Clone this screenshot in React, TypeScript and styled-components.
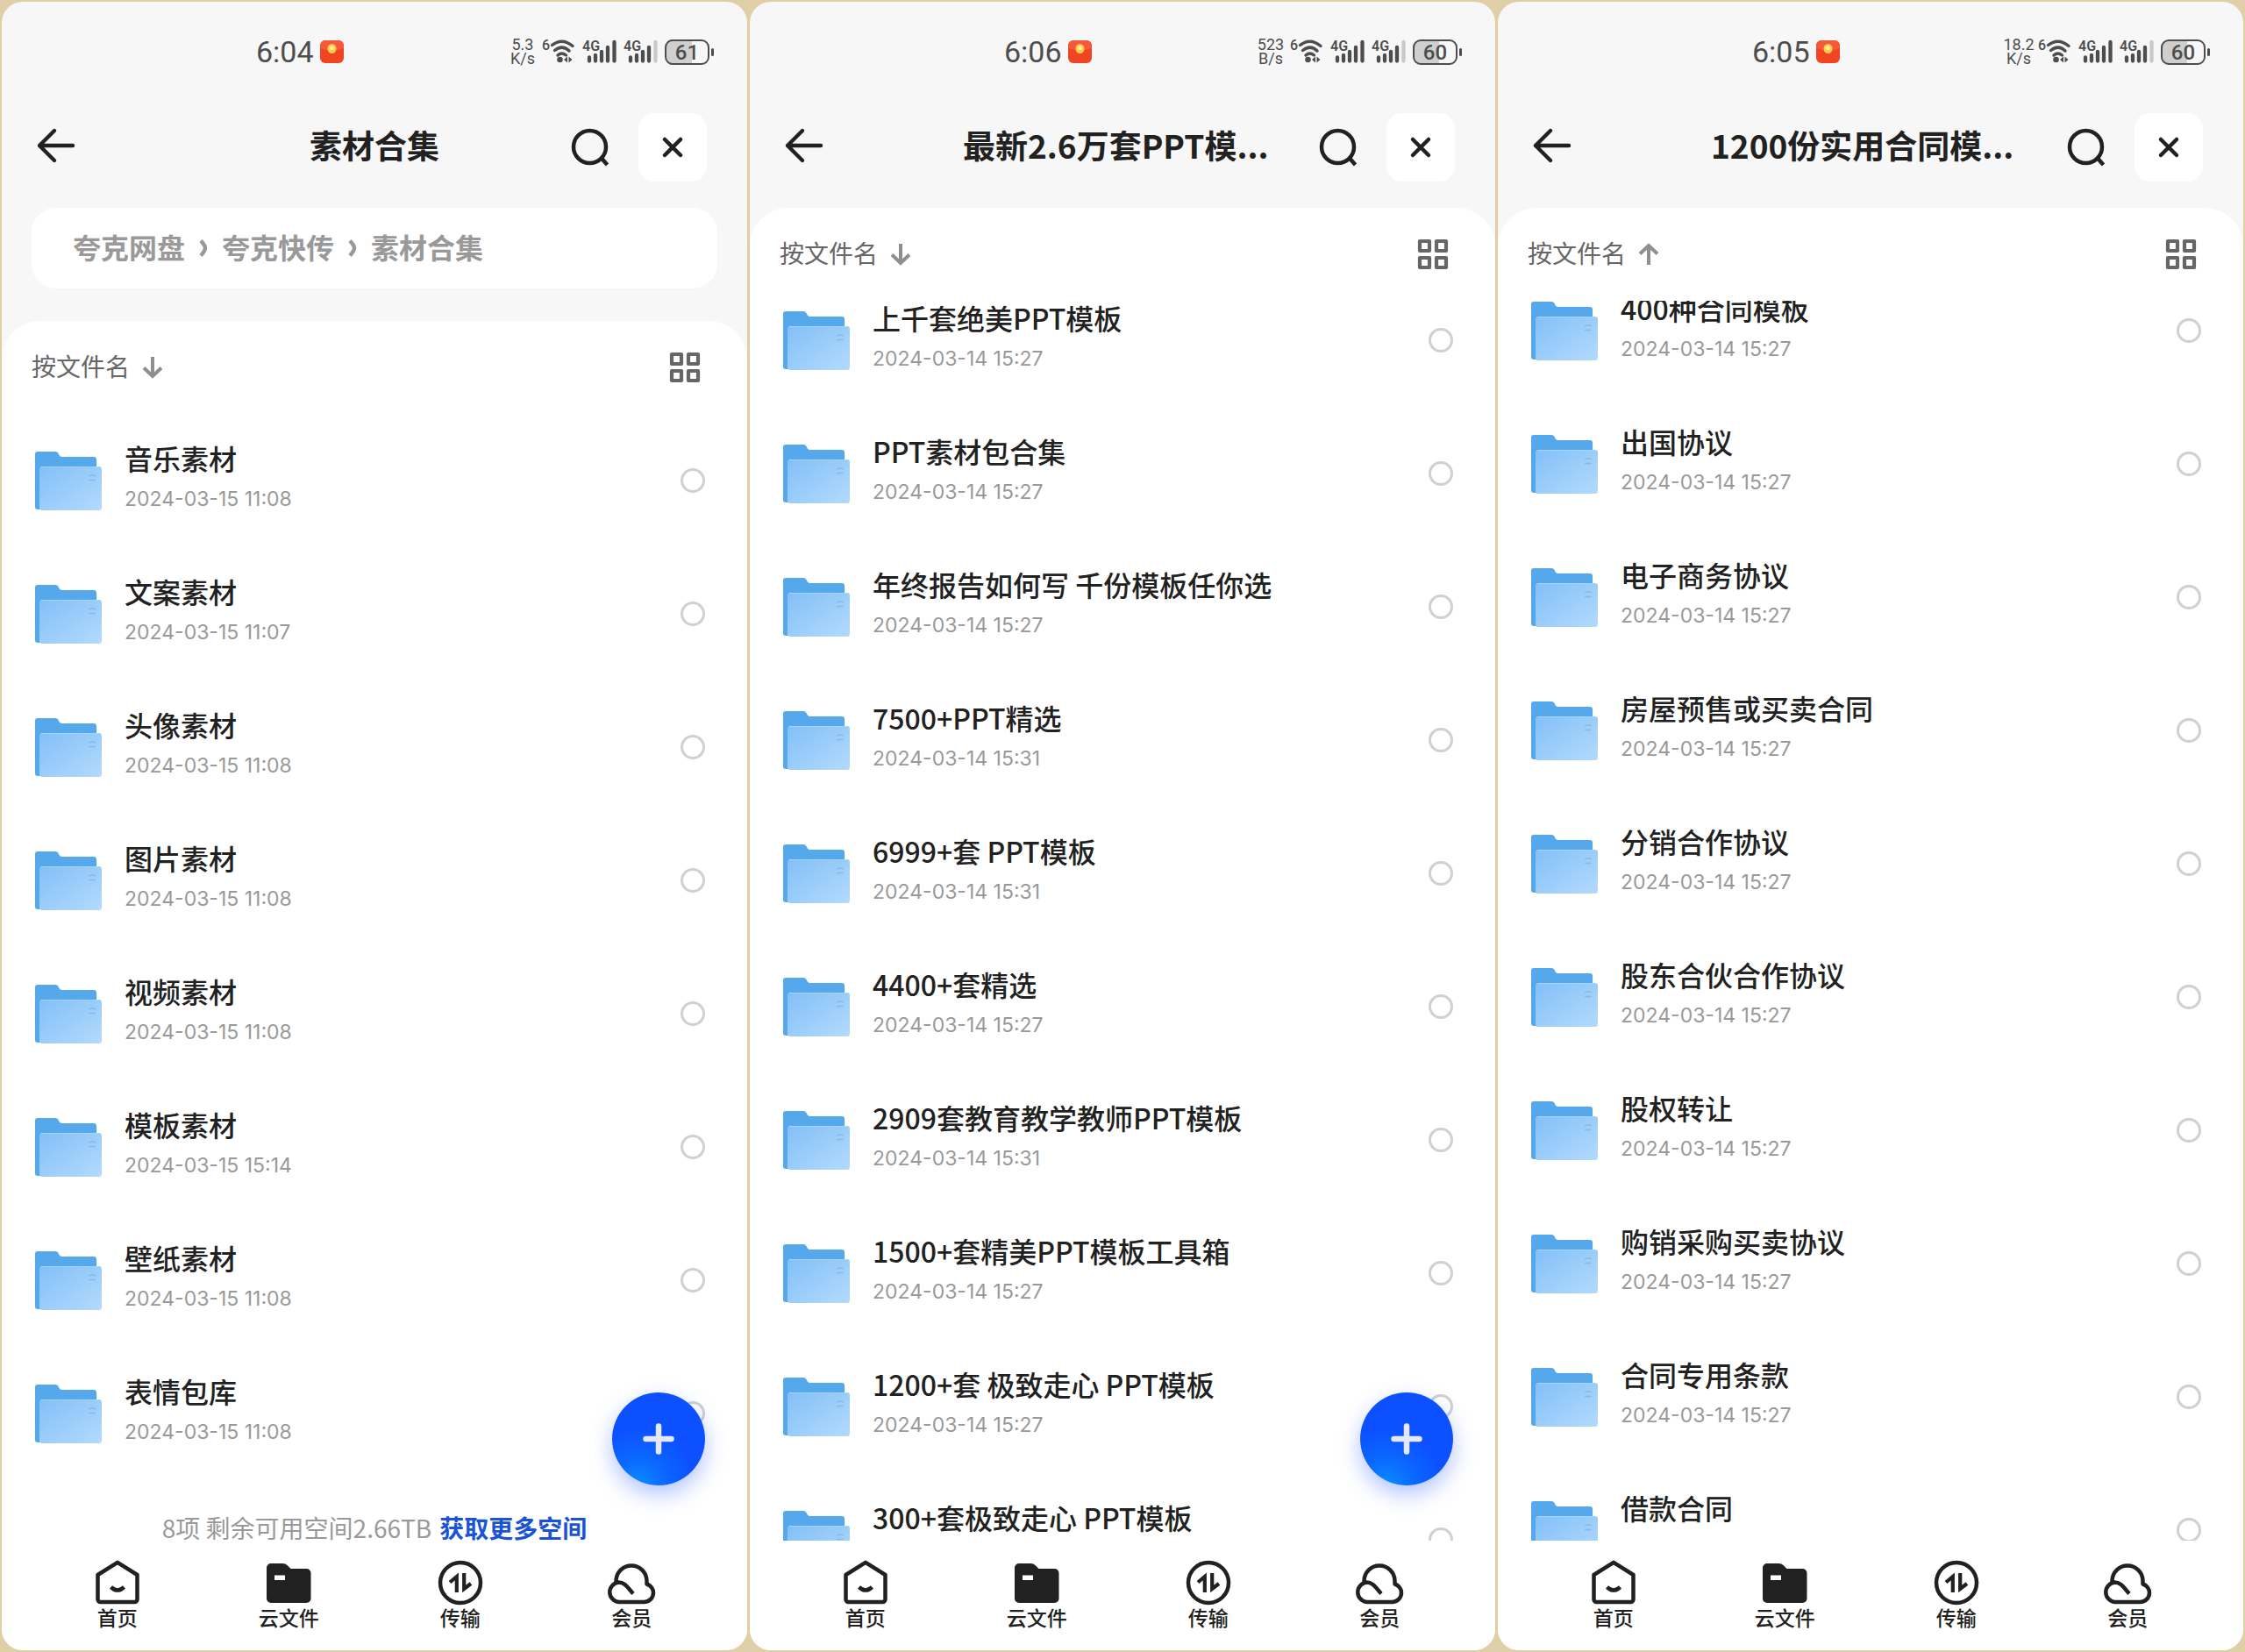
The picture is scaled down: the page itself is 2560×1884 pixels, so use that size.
import React, { useLayoutEffect, useRef } from 'react';
import styled, { createGlobalStyle } from 'styled-components';

const cjk = '"Noto Sans CJK SC", "Noto Sans", sans-serif';
const ink = '#212121';
const statusInk = '#4d4d4d';

const GlobalStyle = createGlobalStyle`
  *, *::before, *::after { box-sizing: border-box; }
  body { margin: 0; background: #dfcea6; font-family: ${cjk}; color: ${ink}; }
  button { border: 0; padding: 0; background: none; color: inherit; font: inherit; cursor: pointer; }
  a { color: inherit; text-decoration: none; }
  svg { display: block; overflow: visible; }
`;

const Board = styled.main`
  display: grid;
  grid-template-columns: repeat(3, minmax(0, 1fr));
  gap: 3px;
  height: 100vh;
  padding: 2px;
`;

const Phone = styled.section`
  position: relative;
  display: flex;
  flex-direction: column;
  min-height: 0;
  overflow: hidden;
  border-radius: 24px;
  background: #f7f7f7;
`;

const StatusBar = styled.div`
  display: flex;
  flex: none;
  align-items: center;
  justify-content: space-between;
  height: 114px;
  padding: 0 38px 0 290px;
  color: ${statusInk};
  font-family: Roboto, ${cjk};
`;

const Clock = styled.div`
  display: flex;
  align-items: center;
  gap: 7px;
  font-size: 34px;
  line-height: 40px;
`;

const Indicators = styled.div`
  display: flex;
  align-items: center;
  gap: 8px;
`;

const Speed = styled.div`
  display: flex;
  flex-direction: column;
  align-items: center;
  width: 28px;
  font-size: 18px;
  line-height: 16px;
  white-space: nowrap;
`;

const Battery = styled.div<{ $level: number }>`
  position: relative;
  width: 51px;
  height: 29px;
  margin-right: 5px;
  border: 2px solid ${statusInk};
  border-radius: 9px;
  background: linear-gradient(to right, #cfcfcf ${(p) => p.$level}%, transparent ${(p) => p.$level}%);
  font-size: 24px;
  font-weight: 500;
  line-height: 26px;
  text-align: center;

  &::after {
    content: '';
    position: absolute;
    top: 8px;
    right: -7px;
    width: 3px;
    height: 9px;
    border-radius: 2px;
    background: ${statusInk};
  }
`;

const TitleBar = styled.header`
  display: grid;
  grid-template-columns: 1fr minmax(364px, auto) 1fr;
  flex: none;
  align-items: center;
  height: 104px;
  margin-bottom: 17px;
  padding: 0 46px 0 38px;
`;

const Title = styled.h1<{ $long: boolean }>`
  margin: 0;
  padding-bottom: 6px;
  padding-left: ${(p) => (p.$long ? 4 : 8)}px;
  font-size: 37px;
  font-weight: 700;
  line-height: 48px;
  text-align: ${(p) => (p.$long ? 'left' : 'center')};
  white-space: nowrap;
`;

const Actions = styled.div`
  display: flex;
  align-items: center;
  justify-content: flex-end;
  gap: 33px;
`;

const CloseButton = styled.button`
  display: grid;
  place-items: center;
  width: 78px;
  height: 78px;
  border-radius: 18px;
  background: #fff;
`;

const Crumbs = styled.nav`
  display: flex;
  flex: none;
  align-items: center;
  gap: 16px;
  height: 92px;
  margin: 0 34px 37px;
  padding: 0 47px;
  border-radius: 28px;
  background: #fff;
  color: #999;
  font-size: 32px;
  font-weight: 700;
  line-height: 44px;
`;

const Crumb = styled.a`
  padding-bottom: 4px;
`;

const Sheet = styled.div`
  display: flex;
  flex: 1;
  flex-direction: column;
  min-height: 0;
  border-radius: 44px 44px 0 0;
  background: #fff;
`;

const Toolbar = styled.div`
  display: flex;
  flex: none;
  align-items: center;
  justify-content: space-between;
  height: 106px;
  padding: 0 54px 0 34px;
  color: #666;
`;

const SortButton = styled.button`
  display: flex;
  align-items: center;
  gap: 14px;
  font-size: 28px;
  line-height: 40px;
`;

const SortLabel = styled.span`
  padding-bottom: 4px;
`;

const List = styled.div`
  flex: 1;
  min-height: 0;
  overflow-y: auto;
  scrollbar-width: none;
`;

const Rows = styled.ul`
  margin: 0;
  padding: 0;
  list-style: none;
`;

const Row = styled.li`
  height: 152px;
`;

const RowLabel = styled.label`
  display: grid;
  grid-template-columns: 76px 1fr 28px;
  align-items: center;
  column-gap: 26px;
  height: 100%;
  padding: 0 48px 0 38px;
`;

const RowText = styled.span`
  display: flex;
  flex-direction: column;
  min-width: 0;
  padding-bottom: 6px;
`;

const Name = styled.span`
  overflow: hidden;
  font-size: 32px;
  font-weight: 500;
  line-height: 48px;
  text-overflow: ellipsis;
  white-space: nowrap;
`;

const Stamp = styled.time`
  color: #999;
  font-family: Inter, ${cjk};
  font-size: 23px;
  line-height: 46px;
`;

const Pick = styled.input`
  appearance: none;
  width: 28px;
  height: 28px;
  margin: 0;
  border: 3px solid #d0d0d0;
  border-radius: 50%;
  background: #fff;

  &:checked { border: 8px solid #0d53ff; }
`;

const Quota = styled.p`
  display: flex;
  justify-content: center;
  gap: 9px;
  margin: 0;
  padding-top: 39px;
  color: #999;
  font-size: 28px;
  line-height: 30px;

  a { color: #1a53d8; font-weight: 700; }
`;

const AddButton = styled.button`
  position: absolute;
  right: 48px;
  bottom: 188px;
  display: grid;
  place-items: center;
  width: 106px;
  height: 106px;
  border-radius: 50%;
  background: radial-gradient(circle at 28% 100%, #0a8dff 0%, #0b68ff 24%, #0d50ff 50%);
  box-shadow: 0 10px 24px rgba(40, 90, 255, 0.36);
`;

const TabBar = styled.nav`
  display: grid;
  grid-template-columns: repeat(4, 1fr);
  flex: none;
  height: 125px;
  padding: 22px 34px 0;
  background: #fff;
`;

const Tab = styled.a`
  display: flex;
  flex-direction: column;
  align-items: center;
  font-size: 23px;
  font-weight: 500;
  line-height: 26px;
`;

const Envelope = () => (
  <svg width="27" height="28" viewBox="0 0 27 28" aria-hidden="true">
    <rect y="1" width="27" height="26" rx="6" fill="#ef4523" />
    <path d="M0 10V7a6 6 0 0 1 6-6h15a6 6 0 0 1 6 6v3Q13.500 15 0 10z" fill="#f4593a" />
    <ellipse cx="13.500" cy="10.500" rx="5" ry="5.500" fill="#ffc94a" />
    <circle cx="13.500" cy="9.500" r="2.500" fill="#fff0a0" />
  </svg>
);

const Wifi = () => (
  <svg width="38" height="30" viewBox="0 0 38 30" aria-hidden="true">
    <text x="0" y="13" fontSize="16" fontWeight="500" fill={statusInk}>6</text>
    <g fill="none" stroke={statusInk} strokeWidth="3.400" strokeLinecap="round">
      <path d="M11.500 7.500Q23-1.500 35 8.500" />
      <path d="M14.500 13.500Q23 6.500 31 14" />
      <path d="M18 19Q22.500 15 27.500 19" />
    </g>
    <circle cx="20.500" cy="24" r="3.300" fill={statusInk} />
    <path d="M29 20.500v7l-4-3.500zM30.500 20.500v7l4-3.500z" fill={statusInk} />
  </svg>
);

const Signal = ({ weak }: { weak?: boolean }) => (
  <svg width="39" height="30" viewBox="0 0 39 30" aria-hidden="true">
    <text x="0" y="14" fontSize="16" fontWeight="600" fill={statusInk}>4G</text>
    <g stroke={statusInk} strokeWidth="4.300" strokeLinecap="round">
      <path d="M8 21.500V25.500M15 19V25.500M22 15V25.500M29 10V25.500" />
      <path d="M36.500 4V25.500" stroke={weak ? '#c9c9c9' : statusInk} />
    </g>
  </svg>
);

const BackIcon = () => (
  <svg width="46" height="42" viewBox="0 0 46 42" fill="none" stroke={ink} strokeWidth="4.400" strokeLinecap="round" strokeLinejoin="round" aria-hidden="true">
    <path d="M43 21H5M22 4L5 21L22 38" />
  </svg>
);

const SearchIcon = () => (
  <svg width="44" height="44" viewBox="0 0 44 44" fill="none" stroke={ink} strokeWidth="4.500" aria-hidden="true">
    <circle cx="21.500" cy="21.500" r="18.500" />
    <path d="M35 34.500L41.500 42" />
  </svg>
);

const CloseIcon = () => (
  <svg width="26" height="26" viewBox="0 0 26 26" fill="none" stroke={ink} strokeWidth="4.500" strokeLinecap="round" aria-hidden="true">
    <path d="M4 4L22 22M22 4L4 22" />
  </svg>
);

const ChevronIcon = () => (
  <svg width="10" height="20" viewBox="0 0 10 20" fill="none" stroke="#999" strokeWidth="4.500" aria-hidden="true">
    <path d="M2 1.500Q7 7 7 10T2 18.500" />
  </svg>
);

const SortArrow = ({ up }: { up?: boolean }) => (
  <svg width="24" height="28" viewBox="0 0 24 28" fill="none" stroke="#8f8f8f" strokeWidth="4" aria-hidden="true">
    {up ? <path d="M12 26V4M2 13.500L12 4L22 13.500" /> : <path d="M12 2V24M2 14.500L12 24L22 14.500" />}
  </svg>
);

const GridIcon = () => (
  <svg width="34" height="34" viewBox="0 0 34 34" fill="none" stroke="#666" strokeWidth="4.200" strokeLinejoin="round" aria-hidden="true">
    <path d="M2 2h11v11H2zM21 2h11v11H21zM2 21h11v11H2zM21 21h11v11H21z" />
  </svg>
);

const FolderIcon = () => (
  <svg width="76" height="67" viewBox="0 0 76 67" aria-hidden="true">
    <path d="M0 3a3 3 0 0 1 3-3h20q3 0 4 3t3 3h37a3 3 0 0 1 3 3v54a3 3 0 0 1-3 3H3a3 3 0 0 1-3-3z" fill="#56a8ec" />
    <rect x="5" y="17" width="71" height="50" rx="3" fill="url(#folderFront)" />
    <path d="M7 17.500h67" stroke="#a9d4fa" strokeWidth="1" />
    <path d="M61 28q4-2 8 0M61 32.500h8" stroke="#86b9ec" strokeWidth="1.500" fill="none" />
  </svg>
);

const PlusIcon = () => (
  <svg width="36" height="36" viewBox="0 0 36 36" stroke="#e4e8fd" strokeWidth="6.500" strokeLinecap="round" aria-hidden="true">
    <path d="M18 3.500V32.500M3.500 18H32.500" />
  </svg>
);

const HomeTab = () => (
  <svg width="56" height="52" viewBox="0 0 56 52" fill="none" stroke={ink} strokeWidth="4.500" strokeLinejoin="round" aria-hidden="true">
    <path d="M28 2.800L50.500 17V45a3 3 0 0 1-3 3H8.500a3 3 0 0 1-3-3V17z" />
    <path d="M20.500 31Q28 38 35.500 31" />
  </svg>
);

const FilesTab = () => (
  <svg width="56" height="52" viewBox="0 0 56 52" aria-hidden="true">
    <path d="M3 9a5 5 0 0 1 5-5h13.500q3 0 5 2l4 4H48.500a5 5 0 0 1 5 5V44a5 5 0 0 1-5 5H8a5 5 0 0 1-5-5z" fill={ink} />
    <rect x="12" y="17.500" width="12" height="5.500" fill="#fff" />
  </svg>
);

const TransferTab = () => (
  <svg width="56" height="52" viewBox="0 0 56 52" fill="none" stroke={ink} strokeWidth="4.500" aria-hidden="true">
    <circle cx="28" cy="26" r="23" />
    <path d="M23.800 37V19L16 25.500M32.200 15V33L40 27" strokeWidth="4.200" />
  </svg>
);

const CloudTab = () => (
  <svg width="56" height="52" viewBox="0 0 56 52" fill="none" stroke={ink} strokeWidth="4.500" strokeLinejoin="round" aria-hidden="true">
    <path d="M10.500 26V24a17.500 17.500 0 0 1 35 0v3.500C50 29 53 33 53 37.500A10.500 10.500 0 0 1 42.500 48H13.500A11.300 11.300 0 0 1 13.500 25.500C20.500 25.500 24 32 30 38.500" />
  </svg>
);

type Entry = [name: string, stamp: string];

interface Screen {
  time: string;
  speed: [string, string];
  battery: number;
  title: string;
  crumbs?: string[];
  ascending?: boolean;
  scrolled: number;
  entries: Entry[];
  quota?: string;
  canAdd?: boolean;
}

const screens: Screen[] = [
  {
    time: '6:04',
    speed: ['5.3', 'K/s'],
    battery: 61,
    title: '素材合集',
    crumbs: ['夸克网盘', '夸克快传', '素材合集'],
    scrolled: 0,
    entries: [
      ['音乐素材', '2024-03-15 11:08'],
      ['文案素材', '2024-03-15 11:07'],
      ['头像素材', '2024-03-15 11:08'],
      ['图片素材', '2024-03-15 11:08'],
      ['视频素材', '2024-03-15 11:08'],
      ['模板素材', '2024-03-15 15:14'],
      ['壁纸素材', '2024-03-15 11:08'],
      ['表情包库', '2024-03-15 11:08'],
    ],
    quota: '8项 剩余可用空间2.66TB',
    canAdd: true,
  },
  {
    time: '6:06',
    speed: ['523', 'B/s'],
    battery: 60,
    title: '最新2.6万套PPT模...',
    scrolled: 31,
    entries: [
      ['上千套绝美PPT模板', '2024-03-14 15:27'],
      ['PPT素材包合集', '2024-03-14 15:27'],
      ['年终报告如何写 千份模板任你选', '2024-03-14 15:27'],
      ['7500+PPT精选', '2024-03-14 15:31'],
      ['6999+套 PPT模板', '2024-03-14 15:31'],
      ['4400+套精选', '2024-03-14 15:27'],
      ['2909套教育教学教师PPT模板', '2024-03-14 15:31'],
      ['1500+套精美PPT模板工具箱', '2024-03-14 15:27'],
      ['1200+套 极致走心 PPT模板', '2024-03-14 15:27'],
      ['300+套极致走心 PPT模板', ''],
    ],
    canAdd: true,
  },
  {
    time: '6:05',
    speed: ['18.2', 'K/s'],
    battery: 60,
    title: '1200份实用合同模...',
    ascending: true,
    scrolled: 42,
    entries: [
      ['400种合同模板', '2024-03-14 15:27'],
      ['出国协议', '2024-03-14 15:27'],
      ['电子商务协议', '2024-03-14 15:27'],
      ['房屋预售或买卖合同', '2024-03-14 15:27'],
      ['分销合作协议', '2024-03-14 15:27'],
      ['股东合伙合作协议', '2024-03-14 15:27'],
      ['股权转让', '2024-03-14 15:27'],
      ['购销采购买卖协议', '2024-03-14 15:27'],
      ['合同专用条款', '2024-03-14 15:27'],
      ['借款合同', ''],
    ],
  },
];

const tabs = [
  { label: '首页', Icon: HomeTab },
  { label: '云文件', Icon: FilesTab },
  { label: '传输', Icon: TransferTab },
  { label: '会员', Icon: CloudTab },
];

function FileList({ screen }: { screen: Screen }) {
  const ref = useRef<HTMLDivElement>(null);
  useLayoutEffect(() => {
    if (ref.current) ref.current.scrollTop = screen.scrolled;
  }, [screen.scrolled]);

  return (
    <List ref={ref}>
      <Rows>
        {screen.entries.map(([name, stamp]) => (
          <Row key={name}>
            <RowLabel>
              <FolderIcon />
              <RowText>
                <Name>{name}</Name>
                <Stamp>{stamp || '\u00a0'}</Stamp>
              </RowText>
              <Pick type="checkbox" />
            </RowLabel>
          </Row>
        ))}
      </Rows>
      {screen.quota && (
        <Quota>
          <span>{screen.quota}</span>
          <a href="#space">获取更多空间</a>
        </Quota>
      )}
    </List>
  );
}

function PhoneScreen({ screen }: { screen: Screen }) {
  return (
    <Phone>
      <StatusBar>
        <Clock>
          <span>{screen.time}</span>
          <Envelope />
        </Clock>
        <Indicators>
          <Speed>
            <span>{screen.speed[0]}</span>
            <span>{screen.speed[1]}</span>
          </Speed>
          <Wifi />
          <Signal />
          <Signal weak />
          <Battery $level={screen.battery}>{screen.battery}</Battery>
        </Indicators>
      </StatusBar>
      <TitleBar>
        <div>
          <button type="button" aria-label="返回"><BackIcon /></button>
        </div>
        <Title $long={screen.title.endsWith('...')}>{screen.title}</Title>
        <Actions>
          <button type="button" aria-label="搜索"><SearchIcon /></button>
          <CloseButton type="button" aria-label="关闭"><CloseIcon /></CloseButton>
        </Actions>
      </TitleBar>
      {screen.crumbs && (
        <Crumbs>
          {screen.crumbs.map((crumb, i) => (
            <React.Fragment key={crumb}>
              {i > 0 && <ChevronIcon />}
              <Crumb href="#folder">{crumb}</Crumb>
            </React.Fragment>
          ))}
        </Crumbs>
      )}
      <Sheet>
        <Toolbar>
          <SortButton type="button">
            <SortLabel>按文件名</SortLabel>
            <SortArrow up={screen.ascending} />
          </SortButton>
          <button type="button" aria-label="网格视图"><GridIcon /></button>
        </Toolbar>
        <FileList screen={screen} />
      </Sheet>
      <TabBar>
        {tabs.map(({ label, Icon }) => (
          <Tab key={label} href="#tab">
            <Icon />
            {label}
          </Tab>
        ))}
      </TabBar>
      {screen.canAdd && <AddButton type="button" aria-label="新建"><PlusIcon /></AddButton>}
    </Phone>
  );
}

const Defs = styled.svg`
  position: absolute;
`;

export default function App() {
  return (
    <>
      <GlobalStyle />
      <Defs width="0" height="0" aria-hidden="true">
        <defs>
          <linearGradient id="folderFront" x1="0" y1="0" x2="1" y2="1">
            <stop offset="0" stopColor="#82c0f7" />
            <stop offset="0.5" stopColor="#9bcdfa" />
            <stop offset="1" stopColor="#b4dafc" />
          </linearGradient>
        </defs>
      </Defs>
      <Board>
        {screens.map((screen) => (
          <PhoneScreen key={screen.time} screen={screen} />
        ))}
      </Board>
    </>
  );
}
